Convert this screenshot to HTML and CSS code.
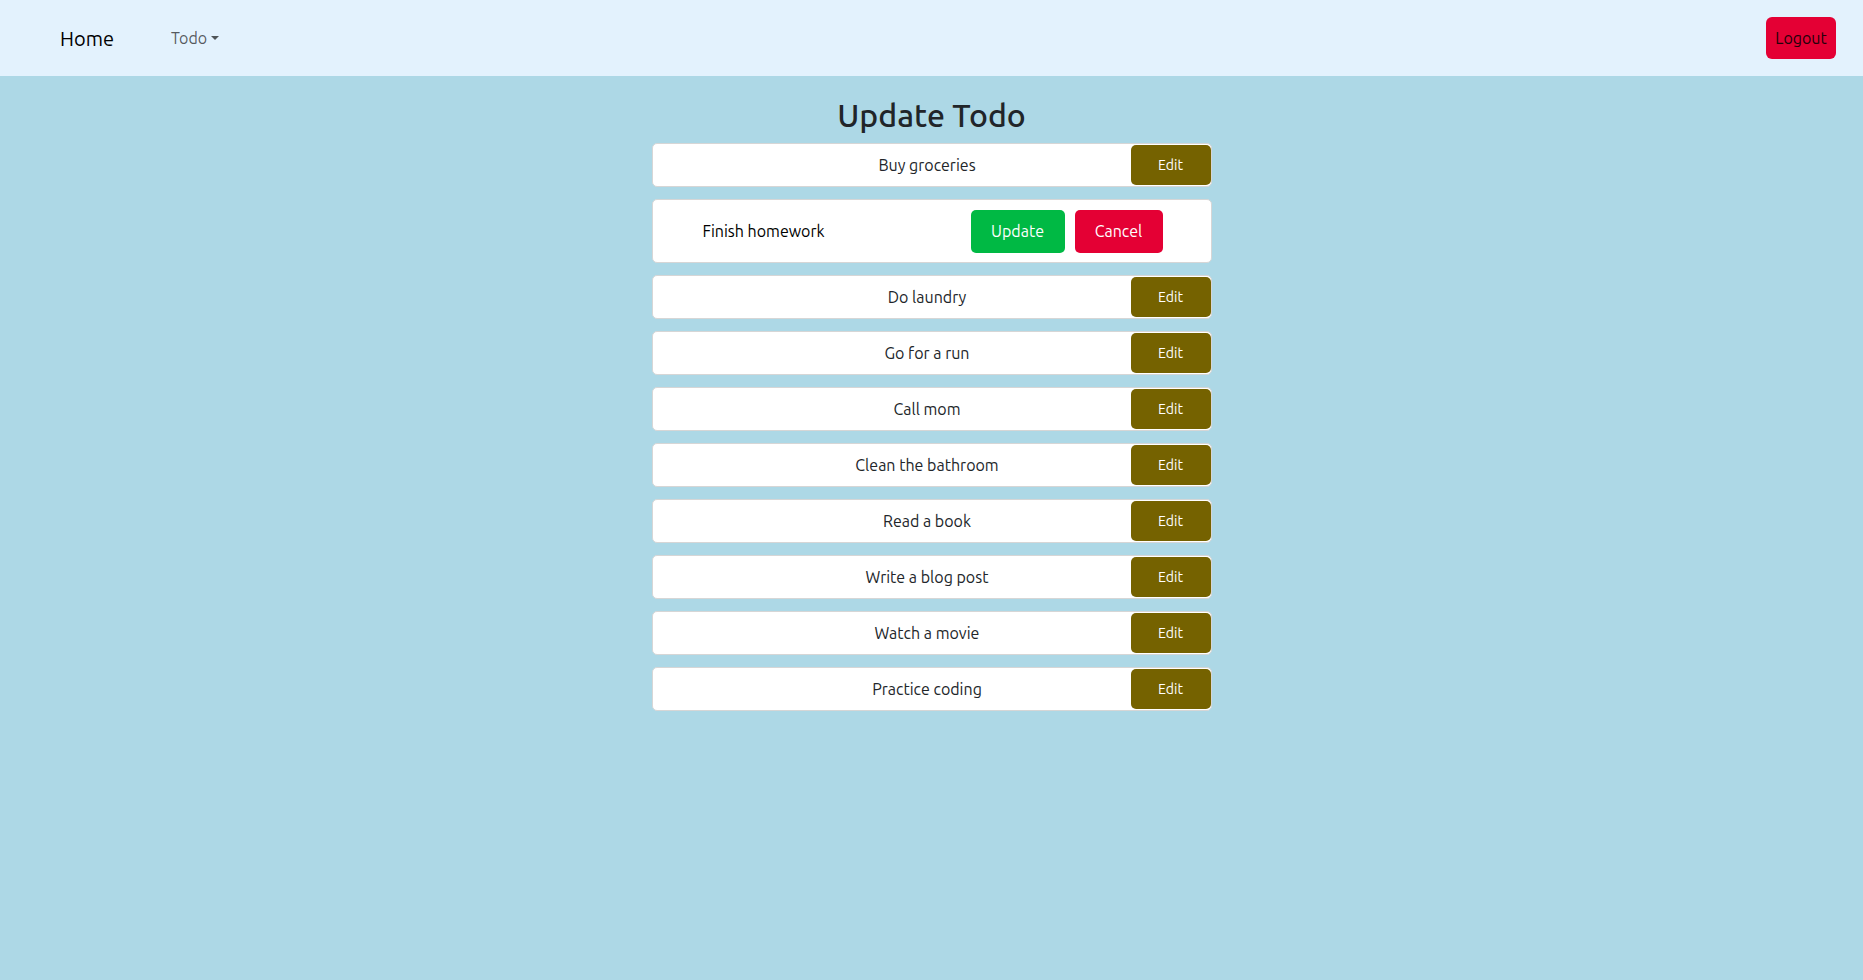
FILE: index.html
```html
<!DOCTYPE html>
<html lang="en">
<head>
<meta charset="utf-8">
<title>Update Todo</title>
<link rel="stylesheet" href="styles.css">
</head>
<body>
<nav class="navbar">
  <div class="nav-left">
    <a class="brand" href="#">Home</a>
    <a class="nav-link" href="#">Todo<span class="caret"></span></a>
  </div>
  <button class="btn-logout">Logout</button>
</nav>
<main class="main">
  <h2 class="title">Update Todo</h2>
  <ul class="todo-list">
    <li class="todo"><span class="todo-text">Buy groceries</span><button class="btn-edit">Edit</button></li>
    <li class="todo editing"><span class="edit-text">Finish homework</span><button class="btn-update">Update</button><button class="btn-cancel">Cancel</button></li>
    <li class="todo"><span class="todo-text">Do laundry</span><button class="btn-edit">Edit</button></li>
    <li class="todo"><span class="todo-text">Go for a run</span><button class="btn-edit">Edit</button></li>
    <li class="todo"><span class="todo-text">Call mom</span><button class="btn-edit">Edit</button></li>
    <li class="todo"><span class="todo-text">Clean the bathroom</span><button class="btn-edit">Edit</button></li>
    <li class="todo"><span class="todo-text">Read a book</span><button class="btn-edit">Edit</button></li>
    <li class="todo"><span class="todo-text">Write a blog post</span><button class="btn-edit">Edit</button></li>
    <li class="todo"><span class="todo-text">Watch a movie</span><button class="btn-edit">Edit</button></li>
    <li class="todo"><span class="todo-text">Practice coding</span><button class="btn-edit">Edit</button></li>
  </ul>
</main>
</body>
</html>
```
FILE: styles.css
```css
* { box-sizing: border-box; }
html, body { margin: 0; padding: 0; }
body {
  background: #add8e6;
  font-family: "Ubuntu", "Noto Sans", "Open Sans", sans-serif;
  color: #212529;
  min-height: 980px;
}
button { font-family: inherit; cursor: pointer; }

.navbar {
  height: 76px;
  background: #e3f2fd;
  display: flex;
  align-items: center;
  justify-content: space-between;
  padding: 0 27px 0 60px;
}
.nav-left { display: flex; align-items: center; gap: 57px; }
.brand {
  font-size: 20px;
  color: #000;
  text-decoration: none;
}
.nav-link {
  font-size: 16px;
  color: rgba(0,0,0,0.65);
  text-decoration: none;
  display: flex;
  align-items: center;
}
.caret {
  display: inline-block;
  margin-left: 4px;
  border-top: 4px solid rgba(0,0,0,0.65);
  border-left: 4px solid transparent;
  border-right: 4px solid transparent;
}
.btn-logout {
  width: 70px;
  height: 42px;
  border: none;
  border-radius: 6px;
  background: #e40034;
  color: #24000a;
  font-size: 16px;
  padding: 0;
}

.main {
  display: flex;
  flex-direction: column;
  align-items: center;
}
.title {
  margin: 20px 0 9px;
  font-size: 32px;
  font-weight: 500;
  line-height: 1.2;
  color: #212529;
}
.todo-list {
  list-style: none;
  margin: 0;
  padding: 0;
  width: 560px;
  display: flex;
  flex-direction: column;
  gap: 12px;
}
.todo {
  display: flex;
  align-items: center;
  background: #fff;
  border: 1px solid #d6d6d6;
  border-radius: 5px;
  padding: 1px 0 1px 1px;
  height: 44px;
  font-size: 16px;
}
.todo-text {
  flex: 1;
  text-align: center;
  margin-right: -70px;
}
.btn-edit {
  position: relative;
  width: 80px;
  height: 40px;
  border: none;
  border-radius: 5px;
  background: #756200;
  color: #fff;
  font-size: 14px;
  padding: 0;
}
.todo.editing {
  height: 64px;
  padding: 0 48px 0 50px;
}
.edit-text { flex: 1; color: #000; }
.btn-update, .btn-cancel {
  height: 43px;
  border: none;
  border-radius: 5px;
  color: #fff;
  font-size: 16px;
  padding: 0 20px;
}
.btn-update { background: #00b944; width: 94px; }
.btn-cancel { background: #e40034; width: 88px; margin-left: 10px; }
```
